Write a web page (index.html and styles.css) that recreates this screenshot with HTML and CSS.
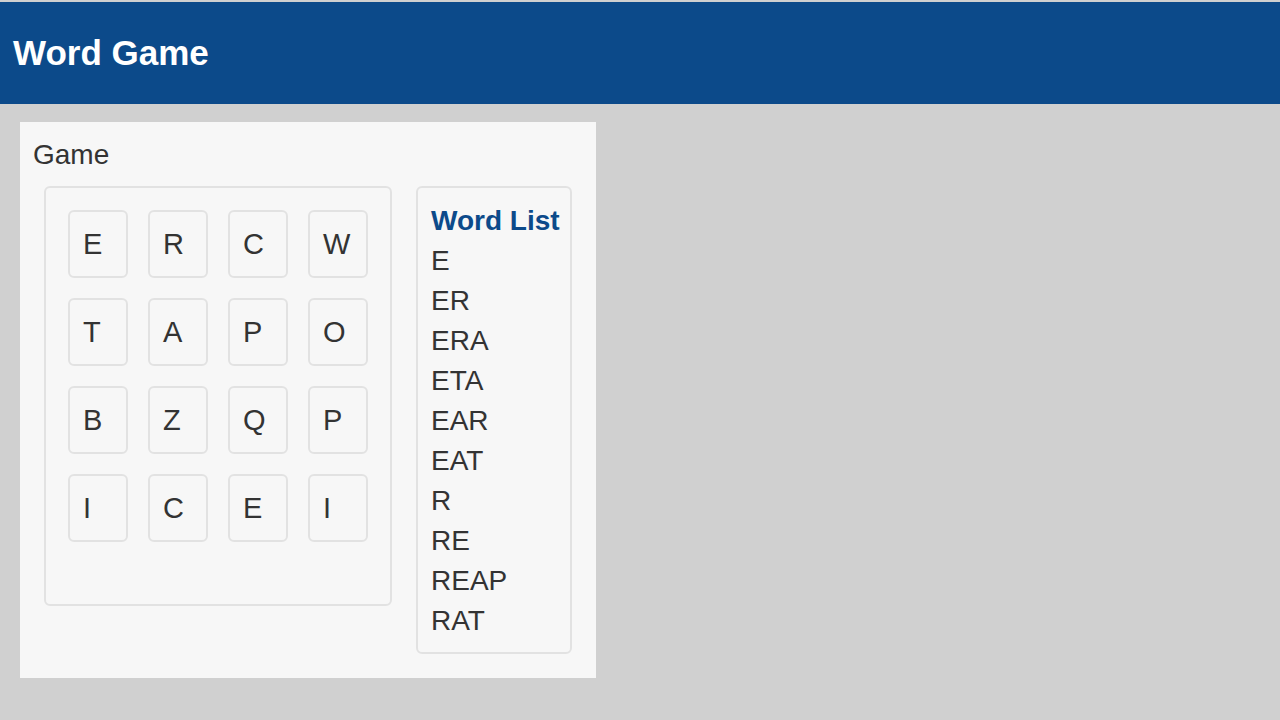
FILE: index.html
```html
<!DOCTYPE html>
<html>
<head>
<meta charset="utf-8">
<title>Word Game</title>
<link rel="stylesheet" href="styles.css">
</head>
<body>
<header class="app-header">
  <h1 class="app-title">Word Game</h1>
</header>
<main class="panel">
  <h2 class="panel-title">Game</h2>
  <div class="panel-body">
    <section class="board">
      <div class="grid">
        <div class="tile">E</div><div class="tile">R</div><div class="tile">C</div><div class="tile">W</div>
        <div class="tile">T</div><div class="tile">A</div><div class="tile">P</div><div class="tile">O</div>
        <div class="tile">B</div><div class="tile">Z</div><div class="tile">Q</div><div class="tile">P</div>
        <div class="tile">I</div><div class="tile">C</div><div class="tile">E</div><div class="tile">I</div>
      </div>
      <div class="current-word"></div>
    </section>
    <aside class="word-list">
      <h3 class="word-list-title">Word List</h3>
      <ul class="words">
        <li>E</li><li>ER</li><li>ERA</li><li>ETA</li><li>EAR</li>
        <li>EAT</li><li>R</li><li>RE</li><li>REAP</li><li>RAT</li>
      </ul>
    </aside>
  </div>
</main>
</body>
</html>
```
FILE: styles.css
```css
html, body {
  margin: 0;
  padding: 0;
}
body {
  background: #d0d0d0;
  font-family: "Liberation Sans", Arial, sans-serif;
  color: #333333;
  padding-top: 2px;
  min-height: 718px;
}
.app-header {
  background: #0c4a8a;
  height: 102px;
  display: flex;
  align-items: center;
  padding-left: 13px;
}
.app-title {
  margin: 0;
  color: #ffffff;
  font-size: 35px;
  font-weight: bold;
  line-height: 40px;
}
.panel {
  display: inline-block;
  background: #f7f7f7;
  margin: 18px 0 0 20px;
  padding: 13px 12px 12px 13px;
}
.panel-title {
  margin: 0;
  font-size: 28px;
  font-weight: normal;
  line-height: 40px;
}
.panel-body {
  display: flex;
  align-items: flex-start;
  margin-top: -1px;
  margin-left: -1px;
}
.board {
  margin: 12px;
  padding: 12px;
  border: 2px solid #e2e2e2;
  border-radius: 6px;
}
.grid {
  display: grid;
  grid-template-columns: repeat(4, 60px);
  grid-auto-rows: 68px;
  gap: 20px;
  padding: 10px;
}
.tile {
  box-sizing: border-box;
  border: 2px solid #e2e2e2;
  border-radius: 6px;
  padding: 12px 12px 12px 13px;
  font-size: 29px;
  line-height: 40px;
}
.current-word {
  height: 40px;
}
.word-list {
  margin: 12px;
  padding: 13px 10px 11px 13px;
  border: 2px solid #e2e2e2;
  border-radius: 6px;
}
.word-list-title {
  margin: 0;
  color: #0c4a8a;
  font-size: 28px;
  font-weight: bold;
  line-height: 40px;
}
.words {
  list-style: none;
  margin: 0;
  padding: 0;
  font-size: 28px;
  line-height: 40px;
}
```
